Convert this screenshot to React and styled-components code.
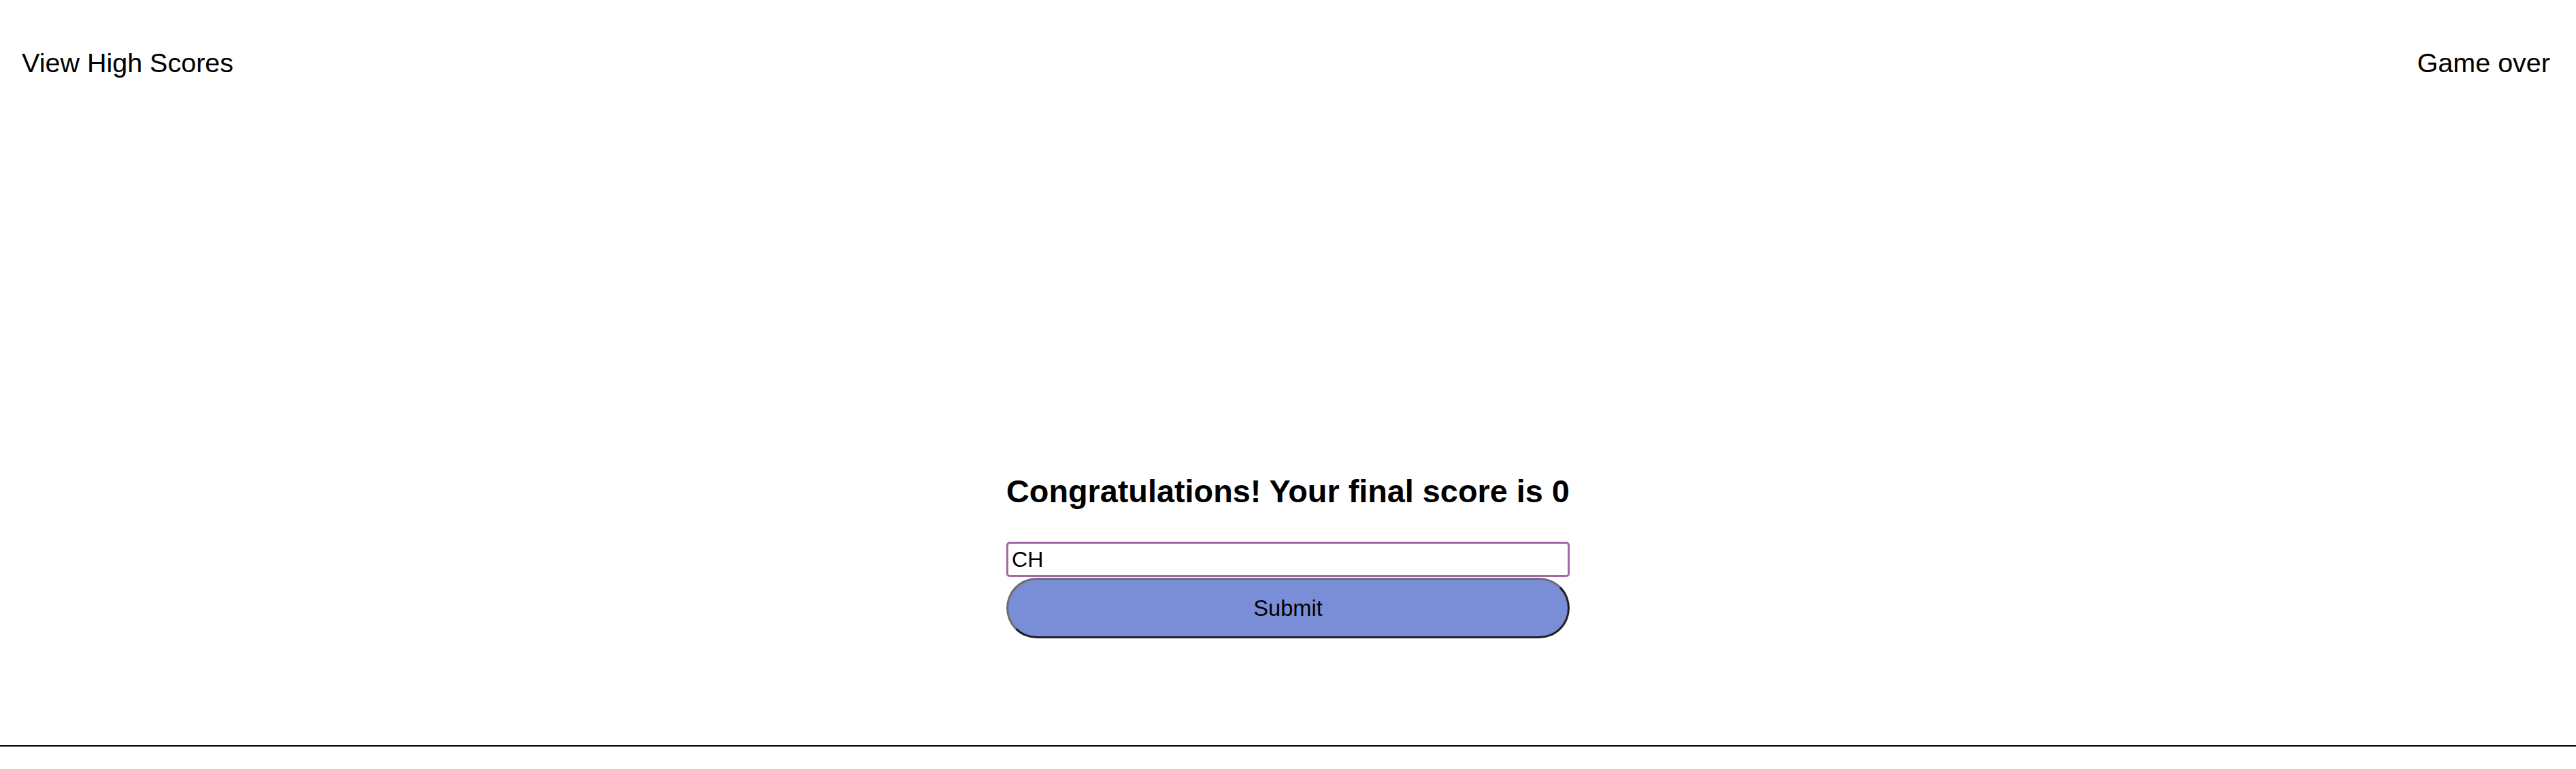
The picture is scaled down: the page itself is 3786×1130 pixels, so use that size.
import React, { useState } from "react";
import styled, { createGlobalStyle } from "styled-components";

const GlobalStyle = createGlobalStyle`
  html, body {
    margin: 0;
    padding: 0;
    background: #ffffff;
  }
  body {
    font-family: "Liberation Sans", Helvetica, Arial, sans-serif;
    color: #000000;
  }
  * { box-sizing: border-box; }
`;

const Page = styled.div`
  display: flex;
  flex-direction: column;
  min-height: 100vh;
`;

const Header = styled.header`
  display: flex;
  justify-content: space-between;
  align-items: center;
  padding: 70px 38px 0 32px;
  font-size: 39.5px;
  line-height: normal;
`;

const HeaderLink = styled.a`
  color: #000000;
  text-decoration: none;
  cursor: pointer;
`;

const Status = styled.span`
  color: #000000;
`;

const Main = styled.main`
  flex: 1;
  display: flex;
  flex-direction: column;
  align-items: center;
  padding-top: 580px;
`;

const Form = styled.form`
  width: 828px;
  display: flex;
  flex-direction: column;
`;

const Title = styled.h2`
  margin: 0 0 47px 0;
  font-size: 46.8px;
  font-weight: 700;
  line-height: normal;
  white-space: nowrap;
`;

const Initials = styled.input`
  width: 100%;
  height: 52px;
  margin: 0;
  padding: 0 5px;
  border: 3px solid #a268a2;
  border-radius: 5px;
  font-family: "Liberation Sans", Helvetica, Arial, sans-serif;
  font-size: 32.2px;
  color: #000000;
  background: #ffffff;
  outline: none;
`;

const SubmitButton = styled.button`
  width: 100%;
  height: 89px;
  margin: 1px 0 0 0;
  border: 3px solid;
  border-color: #6e6e6e #1f1f1f #1f1f1f #6e6e6e;
  border-radius: 45px;
  background: #7a8dd7;
  color: #000000;
  font-family: "Liberation Sans", Helvetica, Arial, sans-serif;
  font-size: 32.6px;
  cursor: pointer;
`;

const Footer = styled.footer`
  height: 35px;
  border-top: 2px solid #000000;
`;

export default function App() {
  const [initials, setInitials] = useState("CH");
  const score = 0;
  return (
    <>
      <GlobalStyle />
      <Page>
        <Header>
          <HeaderLink>View High Scores</HeaderLink>
          <Status>Game over</Status>
        </Header>
        <Main>
          <Form onSubmit={(e) => e.preventDefault()}>
            <Title>Congratulations! Your final score is {score}</Title>
            <Initials
              type="text"
              value={initials}
              onChange={(e) => setInitials(e.target.value)}
            />
            <SubmitButton type="submit">Submit</SubmitButton>
          </Form>
        </Main>
        <Footer />
      </Page>
    </>
  );
}
